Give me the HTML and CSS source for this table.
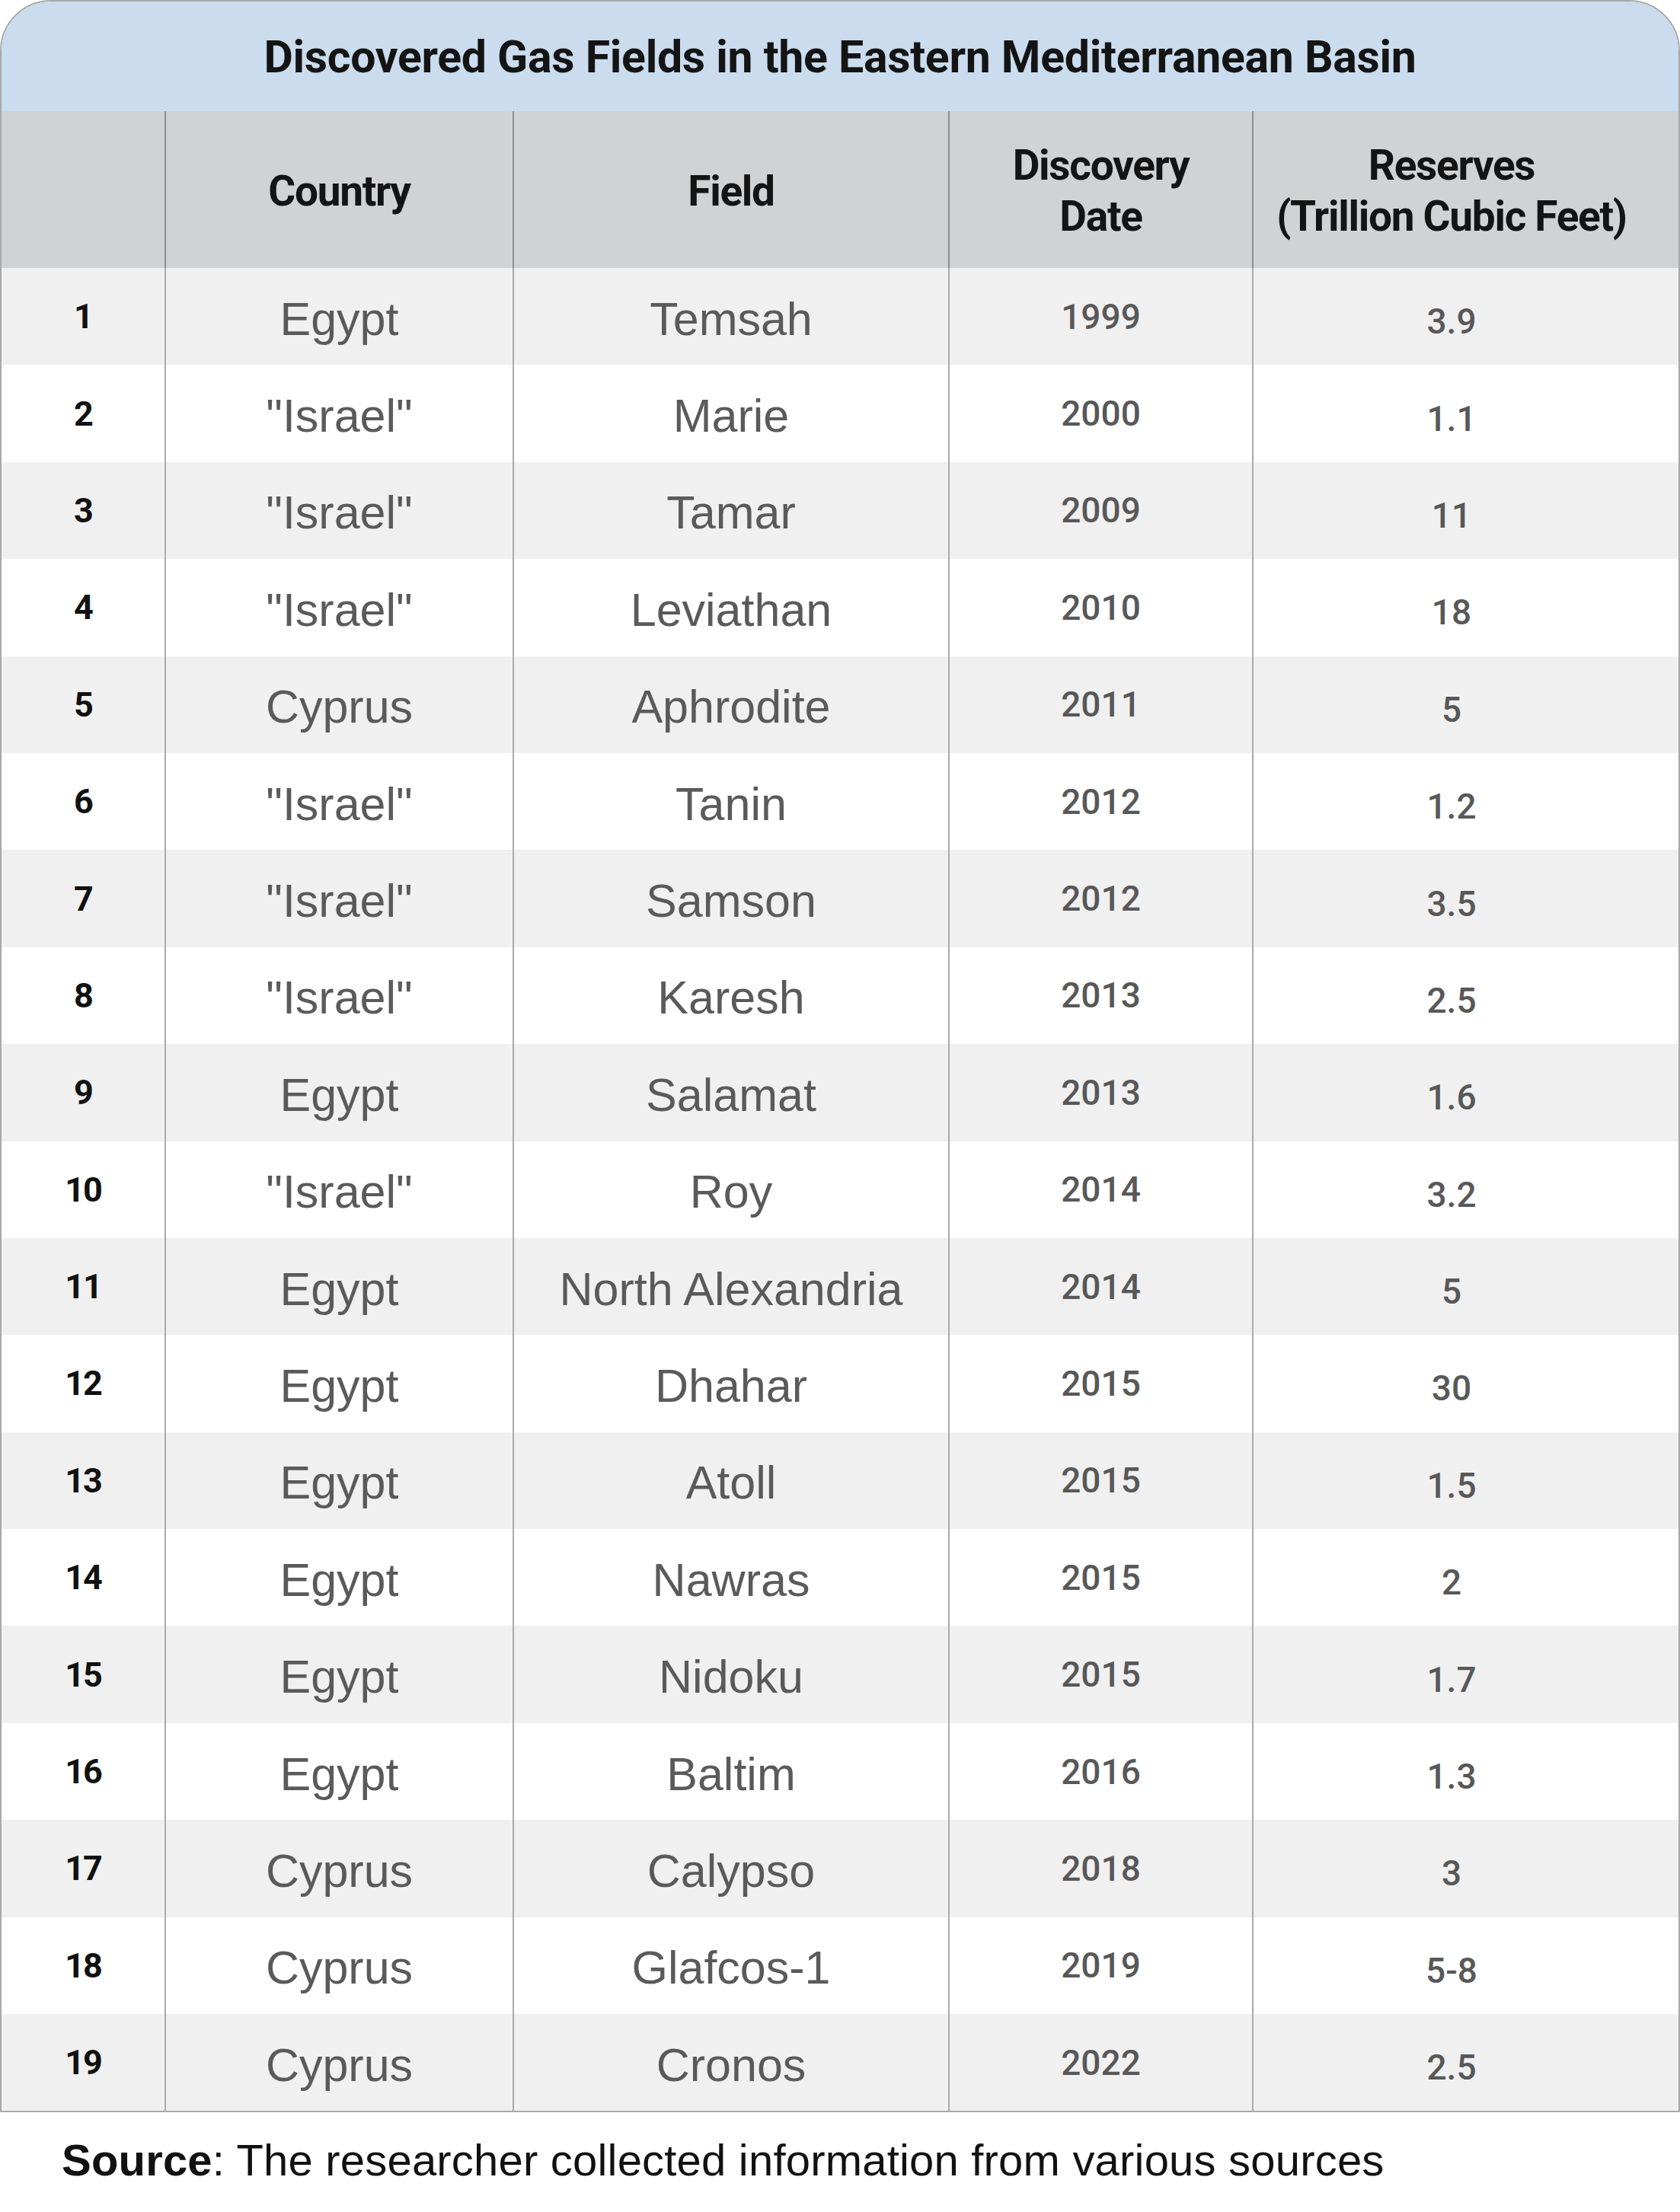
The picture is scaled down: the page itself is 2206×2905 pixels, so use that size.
FILE: index.html
```html
<!DOCTYPE html>
<html lang="en">
<head>
<meta charset="utf-8">
<title>Discovered Gas Fields in the Eastern Mediterranean Basin</title>
<link rel="stylesheet" href="styles.css">
</head>
<body>
<main class="sheet">
  <section class="card">
    <h1 class="title">Discovered Gas Fields in the Eastern Mediterranean Basin</h1>
    <table class="fields">
      <colgroup>
        <col class="c-num"><col class="c-country"><col class="c-field"><col class="c-date"><col class="c-res">
      </colgroup>
      <thead>
        <tr>
          <th class="num"></th>
          <th>Country</th>
          <th>Field</th>
          <th>Discovery<br>Date</th>
          <th class="res">Reserves<br>(Trillion Cubic Feet)</th>
        </tr>
      </thead>
      <tbody>
        <tr><td class="num">1</td><td class="txt">Egypt</td><td class="txt">Temsah</td><td class="date">1999</td><td class="res">3.9</td></tr>
        <tr><td class="num">2</td><td class="txt">"Israel"</td><td class="txt">Marie</td><td class="date">2000</td><td class="res">1.1</td></tr>
        <tr><td class="num">3</td><td class="txt">"Israel"</td><td class="txt">Tamar</td><td class="date">2009</td><td class="res">11</td></tr>
        <tr><td class="num">4</td><td class="txt">"Israel"</td><td class="txt">Leviathan</td><td class="date">2010</td><td class="res">18</td></tr>
        <tr><td class="num">5</td><td class="txt">Cyprus</td><td class="txt">Aphrodite</td><td class="date">2011</td><td class="res">5</td></tr>
        <tr><td class="num">6</td><td class="txt">"Israel"</td><td class="txt">Tanin</td><td class="date">2012</td><td class="res">1.2</td></tr>
        <tr><td class="num">7</td><td class="txt">"Israel"</td><td class="txt">Samson</td><td class="date">2012</td><td class="res">3.5</td></tr>
        <tr><td class="num">8</td><td class="txt">"Israel"</td><td class="txt">Karesh</td><td class="date">2013</td><td class="res">2.5</td></tr>
        <tr><td class="num">9</td><td class="txt">Egypt</td><td class="txt">Salamat</td><td class="date">2013</td><td class="res">1.6</td></tr>
        <tr><td class="num">10</td><td class="txt">"Israel"</td><td class="txt">Roy</td><td class="date">2014</td><td class="res">3.2</td></tr>
        <tr><td class="num">11</td><td class="txt">Egypt</td><td class="txt">North Alexandria</td><td class="date">2014</td><td class="res">5</td></tr>
        <tr><td class="num">12</td><td class="txt">Egypt</td><td class="txt">Dhahar</td><td class="date">2015</td><td class="res">30</td></tr>
        <tr><td class="num">13</td><td class="txt">Egypt</td><td class="txt">Atoll</td><td class="date">2015</td><td class="res">1.5</td></tr>
        <tr><td class="num">14</td><td class="txt">Egypt</td><td class="txt">Nawras</td><td class="date">2015</td><td class="res">2</td></tr>
        <tr><td class="num">15</td><td class="txt">Egypt</td><td class="txt">Nidoku</td><td class="date">2015</td><td class="res">1.7</td></tr>
        <tr><td class="num">16</td><td class="txt">Egypt</td><td class="txt">Baltim</td><td class="date">2016</td><td class="res">1.3</td></tr>
        <tr><td class="num">17</td><td class="txt">Cyprus</td><td class="txt">Calypso</td><td class="date">2018</td><td class="res">3</td></tr>
        <tr><td class="num">18</td><td class="txt">Cyprus</td><td class="txt">Glafcos-1</td><td class="date">2019</td><td class="res">5-8</td></tr>
        <tr><td class="num">19</td><td class="txt">Cyprus</td><td class="txt">Cronos</td><td class="date">2022</td><td class="res">2.5</td></tr>
      </tbody>
    </table>
  </section>
  <p class="source"><strong>Source</strong>: The researcher collected information from various sources</p>
</main>
</body>
</html>
```
FILE: styles.css
```css
html, body {
  margin: 0;
  padding: 0;
  background: #ffffff;
}

.sheet {
  width: 2206px;
}

.card {
  box-sizing: border-box;
  width: 2206px;
  border: 2px solid #a8a8a8;
  border-radius: 67px 67px 0 0;
  overflow: hidden;
  background: #ffffff;
}

.title {
  margin: 0;
  height: 144px;
  display: flex;
  align-items: center;
  justify-content: center;
  background: #cadcee;
  font-family: Roboto, "Liberation Sans", sans-serif;
  font-weight: 700;
  font-size: 59px;
  letter-spacing: -0.3px;
  color: #141414;
}

.fields {
  width: 2202px;
  table-layout: fixed;
  border-collapse: separate;
  border-spacing: 0;
}

.c-num { width: 214px; }
.c-country { width: 457px; }
.c-field { width: 572px; }
.c-date { width: 399px; }
.c-res { width: 560px; }

.fields th,
.fields td {
  box-sizing: border-box;
  padding: 0;
  text-align: center;
  vertical-align: middle;
  border-left: 2px solid #aaaaaa;
}

.fields th:first-child,
.fields td:first-child {
  border-left: none;
}

.fields thead tr {
  height: 206px;
  background: #d1d2d4;
}

.fields th {
  border-left-color: #8f8f8f;
  font-family: Roboto, "Liberation Sans", sans-serif;
  font-weight: 700;
  font-size: 55px;
  line-height: 67px;
  letter-spacing: -1.3px;
  white-space: nowrap;
  color: #141414;
  padding-top: 4px;
}

.fields th.res,
.fields td.res {
  padding-right: 38px;
}

.fields tbody tr {
  height: 127.4px;
  background: #ffffff;
}

.fields tbody tr:nth-child(odd) {
  background: #f0f0f0;
}

.fields td.num {
  font-family: Roboto, "Liberation Sans", sans-serif;
  font-weight: 700;
  font-size: 45px;
  letter-spacing: -2px;
  color: #111111;
}

.fields td.txt {
  font-family: "Liberation Sans", Arial, sans-serif;
  font-size: 61px;
  color: #5a5a5a;
  padding-top: 6px;
}

.fields td.date {
  font-family: Roboto, "Liberation Sans", sans-serif;
  font-weight: 500;
  font-size: 46px;
  color: #585858;
}

.fields td.res {
  font-family: Roboto, "Liberation Sans", sans-serif;
  font-weight: 500;
  font-size: 46px;
  color: #585858;
  padding-top: 13px;
}

.source {
  margin: 30px 0 0;
  padding-left: 81px;
  font-family: "Liberation Sans", Arial, sans-serif;
  font-size: 58px;
  line-height: 66px;
  color: #111111;
  letter-spacing: 0.2px;
}

.source strong {
  font-weight: 700;
}
```
